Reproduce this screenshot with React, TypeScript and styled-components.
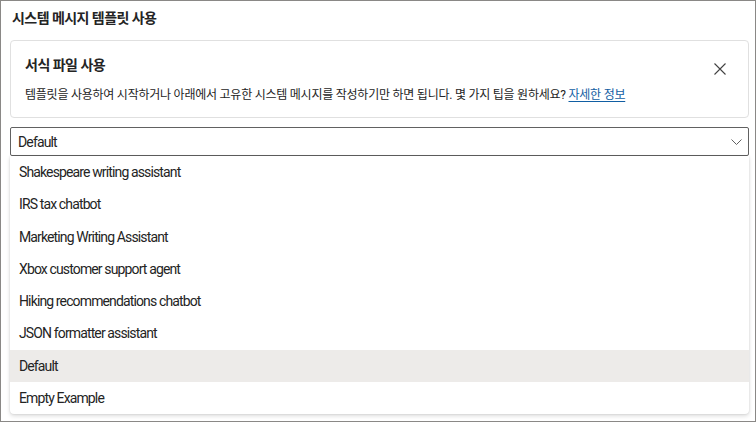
import React from 'react';
import styled, { createGlobalStyle } from 'styled-components';

const GlobalStyle = createGlobalStyle`
  * { box-sizing: border-box; }
  html, body { margin: 0; padding: 0; background: #ffffff; }
  body {
    font-family: Roboto, 'Noto Sans CJK KR', sans-serif;
    color: #323130;
  }
`;

const Frame = styled.div`
  width: 756px;
  height: 422px;
  border: 1px solid #8a8886;
  padding: 7px 6px 0 9px;
  overflow: hidden;
`;

const Title = styled.div`
  font-size: 14px;
  font-weight: 600;
  line-height: 20px;
  letter-spacing: -0.55px;
  padding-left: 2px;
  color: #242424;
`;

const InfoCard = styled.div`
  margin-top: 12px;
  border: 1px solid #e0e0e0;
  border-radius: 4px;
  padding: 14px 18px 12px 14px;
`;

const CardHeader = styled.div`
  height: 20px;
  display: flex;
  justify-content: space-between;
  align-items: flex-start;
`;

const CardHeading = styled.div`
  font-size: 14px;
  font-weight: 600;
  line-height: 20px;
  letter-spacing: -0.5px;
  color: #242424;
`;

const CloseButton = styled.button`
  width: 20px;
  height: 20px;
  margin-top: 4px;
  padding: 0;
  border: none;
  background: transparent;
  display: flex;
  align-items: center;
  justify-content: center;
  color: #424242;
  flex-shrink: 0;
`;

const CardBody = styled.div`
  margin-top: 10px;
  font-size: 12px;
  line-height: 20px;
  letter-spacing: -0.24px;
  color: #242424;
  white-space: nowrap;
`;

const Link = styled.a`
  color: #115ea3;
  text-decoration: underline;
  text-underline-offset: 2px;
`;

const Select = styled.div`
  margin-top: 9px;
  height: 29px;
  border: 1px solid #616161;
  border-radius: 2px;
  display: flex;
  align-items: center;
  justify-content: space-between;
  padding: 0 6px 0 7px;
`;

const SelectValue = styled.span`
  font-size: 14px;
  letter-spacing: -0.85px;
  color: #242424;
`;

const Listbox = styled.div`
  background: #ffffff;
  border-radius: 0 0 4px 4px;
  box-shadow: 0 2px 4px rgba(0, 0, 0, 0.14), 0 0 2px rgba(0, 0, 0, 0.12);
`;

const Option = styled.div<{ $active?: boolean }>`
  height: 32.25px;
  display: flex;
  align-items: center;
  padding-left: 9px;
  font-size: 14px;
  letter-spacing: -0.87px;
  color: #242424;
  background: ${p => (p.$active ? '#edebe9' : 'transparent')};
`;

const options = [
  'Shakespeare writing assistant',
  'IRS tax chatbot',
  'Marketing Writing Assistant',
  'Xbox customer support agent',
  'Hiking recommendations chatbot',
  'JSON formatter assistant',
  'Default',
  'Empty Example',
];

const App = () => {
  return (
    <>
      <GlobalStyle />
      <Frame>
        <Title>시스템 메시지 템플릿 사용</Title>
        <InfoCard>
          <CardHeader>
            <CardHeading>서식 파일 사용</CardHeading>
            <CloseButton aria-label="닫기">
              <svg width="12" height="12" viewBox="0 0 12 12" fill="none">
                <path d="M0.5 0.5L11.5 11.5M11.5 0.5L0.5 11.5" stroke="currentColor" strokeWidth="1.1" />
              </svg>
            </CloseButton>
          </CardHeader>
          <CardBody>
            템플릿을 사용하여 시작하거나 아래에서 고유한 시스템 메시지를 작성하기만 하면 됩니다. 몇 가지 팁을 원하세요?{' '}
            <Link href="#">자세한 정보</Link>
          </CardBody>
        </InfoCard>
        <Select>
          <SelectValue>Default</SelectValue>
          <svg width="11" height="6" viewBox="0 0 11 6" fill="none">
            <path d="M0.5 0.5L5.5 5.5L10.5 0.5" stroke="#616161" strokeWidth="1" />
          </svg>
        </Select>
        <Listbox>
          {options.map(o => (
            <Option key={o} $active={o === 'Default'}>
              {o}
            </Option>
          ))}
        </Listbox>
      </Frame>
    </>
  );
};

export default App;
